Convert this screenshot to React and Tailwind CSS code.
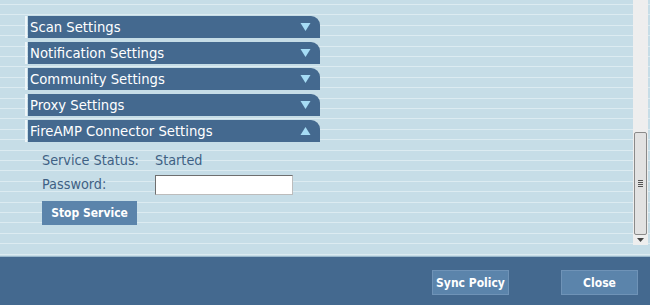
const sections = [
  { title: 'Scan Settings', open: false },
  { title: 'Notification Settings', open: false },
  { title: 'Community Settings', open: false },
  { title: 'Proxy Settings', open: false },
  { title: 'FireAMP Connector Settings', open: true },
]

function Arrow({ up }) {
  return (
    <svg width="11" height="10" viewBox="0 0 11 10" className="shrink-0">
      {up ? (
        <polygon points="5.5,1 10.5,9 0.5,9" fill="#a6dcf5" />
      ) : (
        <polygon points="0.5,1 10.5,1 5.5,9" fill="#a6dcf5" />
      )}
    </svg>
  )
}

function SectionHeader({ title, open }) {
  return (
    <div className="flex h-[22px] w-[295px] border-l-[2px] border-[#eef5f8]">
      <div className="ml-[1px] flex flex-1 items-center justify-between rounded-tr-[9px] bg-[#44698f] pl-[2px] pr-[9px]">
        <span className="pt-[1px] text-[14.7px] leading-none text-white">{title}</span>
        <Arrow up={open} />
      </div>
    </div>
  )
}

function Scrollbar() {
  return (
    <div className="flex h-[245px] w-[15px] flex-col bg-[#eeeeee]">
      <div className="h-[132px]" />
      <div className="mx-[1px] flex h-[103px] items-center justify-center rounded-[2px] border border-[#8a8a8a] bg-[#e2e2e2]">
        <div className="flex flex-col gap-[1px]">
          <div className="h-[1px] w-[5px] bg-[#555]" />
          <div className="h-[1px] w-[5px] bg-[#555]" />
          <div className="h-[1px] w-[5px] bg-[#555]" />
          <div className="h-[1px] w-[5px] bg-[#555]" />
        </div>
      </div>
      <div className="flex flex-1 items-center justify-center">
        <svg width="7" height="4" viewBox="0 0 7 4">
          <polygon points="0,0 7,0 3.5,4" fill="#444" />
        </svg>
      </div>
    </div>
  )
}

export default function App() {
  return (
    <div
      className="flex h-[305px] w-[650px] flex-col overflow-hidden bg-[#c4dce6] text-[#3f6184]"
      style={{ fontFamily: '"DejaVu Sans Condensed", "DejaVu Sans", sans-serif' }}
    >
      <div className="flex h-[256px] bg-[repeating-linear-gradient(180deg,#c6dde7_0px,#c6dde7_4px,#dcebf1_4px,#dcebf1_5px,#c6dde7_5px,#c6dde7_10.4px)]">
        <div className="flex flex-1 flex-col pl-[25px] pt-[16px]">
          <div className="flex flex-col gap-[4px]">
            {sections.map((s) => (
              <SectionHeader key={s.title} title={s.title} open={s.open} />
            ))}
          </div>

          <div className="flex flex-col pl-[17px] pt-[9px] text-[14.3px]">
            <div className="flex h-[20px] items-center">
              <span className="w-[113px]">Service Status:</span>
              <span>Started</span>
            </div>
            <div className="mt-[4px] flex h-[20px] items-center">
              <span className="w-[113px]">Password:</span>
              <input
                type="password"
                className="h-[20px] w-[138px] border border-[#bcbcbc] border-l-[#6f6f6f] border-t-[#6f6f6f] bg-white outline-none"
              />
            </div>
            <button className="mt-[6px] flex h-[24px] w-[95px] items-center justify-center bg-[#5b84ab] text-[12px] font-bold text-white">
              Stop Service
            </button>
          </div>
        </div>
        <div className="mr-[2px]">
          <Scrollbar />
        </div>
      </div>

      <div className="flex flex-1 items-start justify-end gap-[52px] border-t border-[#9ab8cc] bg-[#44698f] pr-[12px] pt-[13px]">
        <button className="flex h-[25px] w-[77px] items-center justify-center border border-[#6f93b7] bg-[#5b84ab] text-[12px] font-bold text-white">
          Sync Policy
        </button>
        <button className="flex h-[25px] w-[77px] items-center justify-center border border-[#6f93b7] bg-[#5b84ab] text-[12px] font-bold text-white">
          Close
        </button>
      </div>
    </div>
  )
}
